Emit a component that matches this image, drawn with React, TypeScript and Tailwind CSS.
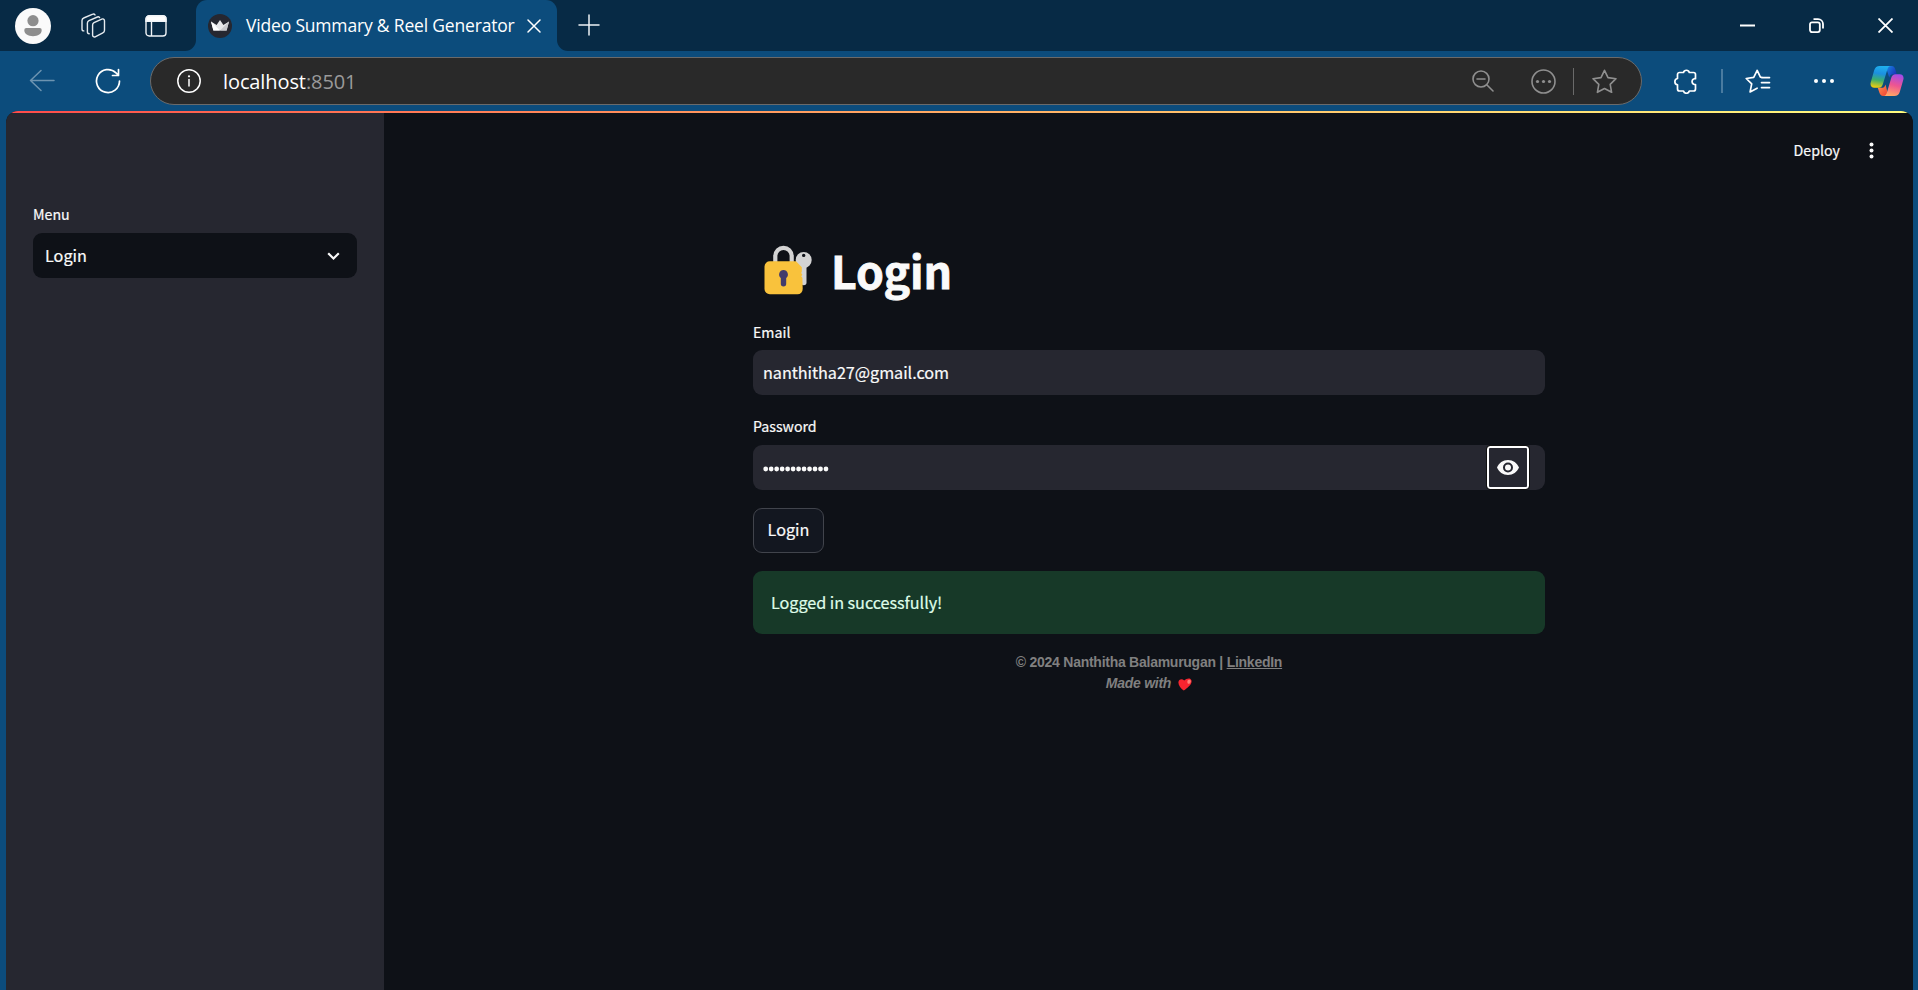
import React from "react";

const source = "font-['Noto_Sans_CJK_JP',sans-serif]";

function Avatar() {
  return (
    <svg className="ml-[15px] size-9 shrink-0" viewBox="0 0 36 36">
      <circle cx="18" cy="18" r="18" fill="#fafafa" />
      <circle cx="18" cy="12.7" r="5.6" fill="#8e8e8e" />
      <path d="M11.3 20h13.4a2 2 0 0 1 2 2c0 4-3.7 6.2-8.7 6.2S9.3 26 9.3 22a2 2 0 0 1 2-2z" fill="#8e8e8e" />
    </svg>
  );
}

function WorkspacesIcon() {
  return (
    <svg className="ml-[30px] h-[26px] w-[25px] shrink-0" viewBox="0 0 25 26" fill="none" stroke="#e6ebef" strokeWidth="1.4" strokeLinejoin="round" strokeLinecap="round">
      <path d="M13 9.700 20.800 6.100a1.900 1.900 0 0 1 2.700 1.700v9.400a3 3 0 0 1-1.700 2.700l-7.600 3.900a1.800 1.800 0 0 1-2.600-1.600V12a2.600 2.600 0 0 1 1.400-2.300z" />
      <path d="M18.600 4.600c-.6-.8-1.300-1-2.200-.6L8 7.700A2.600 2.600 0 0 0 6.400 10v8.800c0 1.200.7 1.900 1.800 1.900" />
      <path d="M14 1.900c-.6-.9-1.300-1.100-2.200-.7L2.700 5A2.600 2.600 0 0 0 1 7.400V16c0 1.200.7 1.900 1.800 1.900" />
    </svg>
  );
}

function TabActionsIcon() {
  return (
    <svg className="ml-[39px] size-[22px] shrink-0" viewBox="0 0 22 22" fill="none" stroke="#f0f4f7" strokeWidth="1.400">
      <rect x="1" y="1" width="20" height="20" rx="3.200" />
      <path d="M1 6.200V4a3.200 3.200 0 0 1 3.200-3.200h13.600A3.200 3.200 0 0 1 21 4v2.200z" fill="#fff" />
      <path d="M6.500 6v15" />
    </svg>
  );
}

function CrownIcon() {
  return (
    <svg className="size-6 shrink-0" viewBox="0 0 24 24">
      <circle cx="12" cy="12" r="12" fill="#262730" />
      <path d="M3 7.600 8.600 11 12 6l3.400 5L21 7.600 18.600 16.500H5.400z" fill="#e8e8ea" />
      <path d="M3 7.600 12 16.500H5.400z" fill="#fff" />
      <path d="M21 7.600 12 16.500h6.600z" fill="#c9c9cd" />
    </svg>
  );
}

function TabStrip() {
  return (
    <div className="flex h-[51px] items-center bg-[#072a45]">
      <Avatar />
      <WorkspacesIcon />
      <TabActionsIcon />
      <svg className="ml-[18px] size-[11px] shrink-0 self-end" viewBox="0 0 11 11">
        <path d="M11 0v11H0A11 11 0 0 0 11 0z" fill="#0c4c7c" />
      </svg>
      <div className="flex h-full w-[361px] items-center rounded-t-[11px] bg-[#0c4c7c] pl-[12px]">
        <CrownIcon />
        <span className="-mt-px ml-[14px] w-[281px] whitespace-nowrap font-['Open_Sans',sans-serif] text-[17.500px] leading-6 tracking-[-0.180px] text-white">
          Video Summary &amp; Reel Generator
        </span>
        <svg className="size-[14px] shrink-0" viewBox="0 0 14 14" stroke="#fff" strokeWidth="1.500" strokeLinecap="round">
          <path d="M1 1l12 12M13 1 1 13" />
        </svg>
      </div>
      <svg className="size-[11px] shrink-0 self-end" viewBox="0 0 11 11">
        <path d="M0 0v11h11A11 11 0 0 1 0 0z" fill="#0c4c7c" />
      </svg>
      <svg className="mb-px ml-[10px] size-[22px] shrink-0" viewBox="0 0 22 22" stroke="#eef2f5" strokeWidth="1.500" strokeLinecap="round">
        <path d="M11 1v20M1 11h20" />
      </svg>
      <div className="ml-auto flex items-center gap-[54px] pr-[25px]">
        <svg className="size-[15px]" viewBox="0 0 15 15">
          <path d="M0 6.500h15v2H0z" fill="#fff" />
        </svg>
        <svg className="size-[15px]" viewBox="0 0 15 15" fill="none" stroke="#fff" strokeWidth="1.800">
          <rect x="1" y="4.300" width="9.800" height="9.800" rx="2" />
          <path d="M4.500 1.100H9a5 5 0 0 1 5 5v4.400" />
        </svg>
        <svg className="size-[15px]" viewBox="0 0 15 15" stroke="#fff" strokeWidth="1.800">
          <path d="M.5.5l14 14M14.500.5l-14 14" />
        </svg>
      </div>
    </div>
  );
}

function CopilotLogo() {
  return (
    <svg className="ml-[35px] h-[32px] w-[34px] shrink-0" viewBox="0 0 35 32">
      <defs>
        <linearGradient id="cpLeft" x1="0.500" y1="0" x2="0.350" y2="1">
          <stop offset="0" stopColor="#1fb0ee" />
          <stop offset="0.350" stopColor="#1c8fe0" />
          <stop offset="0.650" stopColor="#3cae6e" />
          <stop offset="1" stopColor="#f3cd0b" />
        </linearGradient>
        <linearGradient id="cpTop" x1="0" y1="0" x2="1" y2="0.600">
          <stop offset="0" stopColor="#1a8fe8" />
          <stop offset="1" stopColor="#1733b8" />
        </linearGradient>
        <linearGradient id="cpRight" x1="0.650" y1="0" x2="0.400" y2="1">
          <stop offset="0" stopColor="#a34be8" />
          <stop offset="0.500" stopColor="#ee5591" />
          <stop offset="1" stopColor="#ffa765" />
        </linearGradient>
        <linearGradient id="cpBottom" x1="0" y1="0" x2="1" y2="1">
          <stop offset="0" stopColor="#ff9150" />
          <stop offset="1" stopColor="#ea3d32" />
        </linearGradient>
      </defs>
      <path d="M16 .5h6.500c2 0 3 1.500 3.500 3.300L27.500 9H24c-2.500 0-3.500 1.200-4.200 3.500z" fill="url(#cpTop)" />
      <path d="M19 31.500h-5.500c-2 0-3.200-1.400-3.800-3.300L8 23h4c2.200 0 3.300-1.200 4-3.500z" fill="url(#cpBottom)" />
      <path d="M10 .5h11.500c-2 0-3 1.600-3.700 3.800l-4.600 15c-.8 2.500-2 3.700-4.200 3.700H4.500C1.500 23-.2 20.800.8 17.200L4.300 5C5.200 2 7 .5 10 .5z" fill="url(#cpLeft)" />
      <path d="M25 31.500H13.800c2 0 3-1.600 3.700-3.800l4.400-15C22.600 10.200 24 9 26.200 9h4.400c3 0 4.600 2.200 3.700 5.800L30.700 27c-.9 3-2.700 4.500-5.700 4.500z" fill="url(#cpRight)" />
    </svg>
  );
}

function Toolbar() {
  return (
    <div className="flex h-[60px] items-center bg-[#0c4c7c]">
      <svg className="ml-[29px] h-[24px] w-[26px] shrink-0" viewBox="0 0 26 24" fill="none" stroke="#6d94b1" strokeWidth="1.500" strokeLinecap="round" strokeLinejoin="round">
        <path d="M25 11.500H1.500M12 1.500l-10.500 10 10.500 10" />
      </svg>
      <svg className="ml-[40px] size-[26px] shrink-0" viewBox="0 0 26 26" fill="none" stroke="#fff" strokeWidth="1.700" strokeLinecap="round" strokeLinejoin="round">
        <path d="M24.500 13A11.500 11.500 0 1 1 21 4.800l2.200 2.200M23.500 1.500v6h-6" />
      </svg>
      <div className="ml-[29px] flex h-12 w-[1492px] shrink-0 items-center rounded-full border-[1.500px] border-[#6a6a6a] bg-[#292929] pl-[26px]">
        <svg className="size-6 shrink-0" viewBox="0 0 24 24" fill="none" stroke="#fff" strokeWidth="1.500" strokeLinecap="round">
          <circle cx="12" cy="12" r="11.200" />
          <path d="M12 10.500v6.500" />
          <circle cx="12" cy="7.300" r="1.100" fill="#fff" stroke="none" />
        </svg>
        <span className="ml-[22px] mt-px whitespace-nowrap font-['Open_Sans',sans-serif] text-[20px] leading-6 tracking-[-0.100px] text-white">
          localhost<span className="text-[#9a9a9a]">:8501</span>
        </span>
        <div className="ml-auto flex items-center pr-[24px] text-[#8f8f8f]">
          <svg className="size-[22px]" viewBox="0 0 22 22" fill="none" stroke="currentColor" strokeWidth="1.600" strokeLinecap="round">
            <circle cx="9" cy="9" r="8" />
            <path d="M15 15l6 6M5 9h8" />
          </svg>
          <svg className="ml-[37px] size-[25px]" viewBox="0 0 25 25" fill="none" stroke="currentColor" strokeWidth="1.600">
            <circle cx="12.500" cy="12.500" r="11.500" />
            <g fill="currentColor" stroke="none">
              <circle cx="6.500" cy="12.500" r="1.600" />
              <circle cx="12.500" cy="12.500" r="1.600" />
              <circle cx="18.500" cy="12.500" r="1.600" />
            </g>
          </svg>
          <div className="ml-[17px] h-[27px] w-px bg-[#6a6a6a]" />
          <svg className="ml-[18px] size-[25px]" viewBox="0 0 25 25" fill="none" stroke="currentColor" strokeWidth="1.600" strokeLinejoin="round">
            <path d="M12.500 1.300l3.500 7.300 8 1.100-5.800 5.600 1.400 8-7.100-3.800-7.100 3.800 1.400-8L1 9.700l8-1.100z" />
          </svg>
        </div>
      </div>
      <svg className="ml-[32px] h-[25px] w-[23px] shrink-0" viewBox="0 0 23 25" fill="none" stroke="#fff" strokeWidth="1.700" strokeLinejoin="round">
        <path d="M5.500 3.500h4a3 3 0 0 1 5.800 0h4.200a2 2 0 0 1 2 2v4.200h-1.200a3 3 0 0 0 0 5.800h1.200v4.500a2 2 0 0 1-2 2h-4.200a3 3 0 0 1-5.800 0h-4a2 2 0 0 1-2-2v-4.200a3.200 3.200 0 0 1 0-6.300v-4a2 2 0 0 1 2-2z" />
      </svg>
      <div className="ml-[24px] h-6 w-[1.500px] shrink-0 bg-[#4a7ba0]" />
      <svg className="ml-[22px] h-[25px] w-[26px] shrink-0" viewBox="0 0 26 25" fill="none" stroke="#fff" strokeWidth="1.700" strokeLinejoin="round" strokeLinecap="round">
        <path d="M17 8.300l-1.600-.2-3.200-6.800-3.500 7.100-7.500 1.100 5.500 5.400-1.600 8 7-3.700M16.500 8.600h8M16.500 13.600h8M16.500 18.600h8" />
      </svg>
      <svg className="ml-[42px] h-[6px] w-[22px] shrink-0" viewBox="0 0 22 6" fill="#fff">
        <circle cx="3" cy="3" r="2" />
        <circle cx="11" cy="3" r="2" />
        <circle cx="19" cy="3" r="2" />
      </svg>
      <CopilotLogo />
    </div>
  );
}

function Sidebar() {
  return (
    <aside className="w-[378px] shrink-0 bg-[#262730] pl-[27px] pt-[89px]">
      <label className="block text-[14.200px] leading-[24px] text-[#fafafa]">Menu</label>
      <div className="mt-[7px] flex h-[45px] w-[324px] items-center justify-between rounded-[9px] bg-[#0e1117] pb-px pl-[12px] pr-[17px] text-[16.200px] leading-6 text-[#fafafa]">
        <span>Login</span>
        <svg className="size-[13px]" viewBox="0 0 13 13" fill="none" stroke="#fafafa" strokeWidth="2.200">
          <path d="M1.200 4.300l5.300 5.200 5.300-5.200" />
        </svg>
      </div>
    </aside>
  );
}

function LockIcon() {
  return (
    <svg className="ml-[11px] h-[50px] w-[48px] shrink-0" viewBox="0 0 48 50">
      <path d="M11.300 18v-7a8.200 8.200 0 0 1 16.400 0v7" fill="none" stroke="#d3d3d3" strokeWidth="4.200" />
      <path d="M37 20h5.500v17.500a2.700 2.700 0 0 1-5.500 0z" fill="#d3d3d3" />
      <path d="M39.700 7a8 8 0 1 1 0 16 8 8 0 0 1 0-16zm0 1.700a1.700 1.700 0 1 0 0 3.400 1.700 1.700 0 0 0 0-3.400z" fill="#d3d3d3" fillRule="evenodd" />
      <path d="M6 16.300h26l5.800 6v4.200l-.6 1.500 1.200 1.700-1.200 1.500 1.200 1.600.3 11a5.300 5.300 0 0 1-5.200 5.500H6A5.300 5.300 0 0 1 .5 44V21.500A5.300 5.300 0 0 1 6 16.300z" fill="#f9c23c" />
      <path d="M19.500 25a4.500 4.500 0 0 1 2.700 8v5.700a2.700 2.700 0 0 1-5.400 0V33a4.500 4.500 0 0 1 2.700-8z" fill="#433b6b" />
    </svg>
  );
}

function Main() {
  return (
    <main className="flex-1 bg-[#0e1117] text-[#fafafa]">
      <div className="flex h-[75px] items-center justify-end pr-[38px]">
        <span className="-mt-px text-[14.200px] leading-6">Deploy</span>
        <svg className="ml-[28px] h-[17px] w-[7px]" viewBox="0 0 7 17" fill="#fafafa">
          <circle cx="3.500" cy="2.500" r="2" />
          <circle cx="3.500" cy="8.500" r="2" />
          <circle cx="3.500" cy="14.500" r="2" />
        </svg>
      </div>
      <div className="ml-[369px] w-[792px] pt-[49px]">
        <h1 className="flex h-[66px] items-center text-[44.600px] font-bold leading-[66px]">
          <LockIcon />
          <span className="ml-[19px] tracking-[-0.200px] [-webkit-text-stroke:0.800px_#fafafa]">Login</span>
        </h1>
        <label className="mt-[17px] block text-[14.200px] leading-6">Email</label>
        <div className="mt-[6px] flex h-[45px] items-center rounded-[9px] bg-[#262730] pb-[2px] pl-[10px] text-[16.200px] leading-6 tracking-[-0.040px]">
          nanthitha27@gmail.com
        </div>
        <label className="mt-[19px] block text-[14.200px] leading-6">Password</label>
        <div className="mt-[7px] flex h-[45px] items-center justify-between rounded-[9px] bg-[#262730] pl-[10px] pr-4">
          <svg className="mt-[2px] h-[6px] w-[68px]" viewBox="0 0 68 6" fill="#fafafa">
            {Array.from({ length: 12 }, (_, i) => (
              <circle key={i} cx={2.7 + i * 5.48} cy="3" r="2.400" />
            ))}
          </svg>
          <div className="flex h-[43px] w-[42px] items-center justify-center rounded-[3px] border-2 border-white outline outline-1 outline-[#101010]">
            <svg className="h-[15px] w-[22px]" viewBox="0 0 22 15">
              <path d="M11 0c5 0 9.200 3.100 11 7.500C20.200 11.900 16 15 11 15S1.800 11.900 0 7.500C1.800 3.100 6 0 11 0zm0 2.500a5 5 0 1 0 0 10 5 5 0 0 0 0-10zm0 2a3 3 0 1 1 0 6 3 3 0 0 1 0-6z" fill="#fafafa" fillRule="evenodd" />
            </svg>
          </div>
        </div>
        <button className="mt-[18px] flex h-[45px] w-[71px] items-center justify-center rounded-[9px] border border-[#41444c] bg-[#131720] pb-[3px] text-[16.200px] leading-6">
          Login
        </button>
        <div className="mt-[18px] flex h-[63px] items-center rounded-[9px] bg-[#173928] pb-[2px] pl-[18px] text-[16.200px] leading-6 tracking-[-0.040px] text-[#dffde9]">
          Logged in successfully!
        </div>
        <footer className="mt-[18px] text-center font-['Liberation_Sans',Arial,sans-serif] text-[14px] font-bold leading-[21px] tracking-[-0.260px] text-[#808080] [-webkit-text-stroke:0px]">
          <p>
            © 2024 Nanthitha Balamurugan | <a className="underline" href="#linkedin">LinkedIn</a>
          </p>
          <p className="flex items-center justify-center italic">
            Made with
            <svg className="ml-[7px] mt-px h-[13px] w-[14px]" viewBox="0 0 14 13">
              <path d="M5.700 12.600C3 10.500.2 7.500.4 4.200.6 1.300 4 .2 6.200 2.600 8.500.2 12.700-.5 13.500 2.600 14.200 6.500 9.500 9.500 5.700 12.600z" fill="#f8242f" />
              <path d="M10.200 2c1.500-.7 2.700.1 2.600 1.400-.1 1.200-1.400 2.500-2.300 2.400-1.300-.1-1.600-3.200-.3-3.800z" fill="#ff8178" />
            </svg>
          </p>
        </footer>
      </div>
    </main>
  );
}

export default function App() {
  return (
    <div className="flex h-[990px] w-[1918px] flex-col overflow-hidden bg-[#0c4c7c]">
      <TabStrip />
      <Toolbar />
      <div className={`ml-[6px] flex w-[1907px] flex-1 flex-col overflow-hidden rounded-t-[12px] bg-[#0e1117] [-webkit-text-stroke:0.200px] ${source}`}>
        <div className="h-[2px] shrink-0 bg-gradient-to-r from-[#ff4b4b] to-[#fffd80]" />
        <div className="flex flex-1">
          <Sidebar />
          <Main />
        </div>
      </div>
    </div>
  );
}
